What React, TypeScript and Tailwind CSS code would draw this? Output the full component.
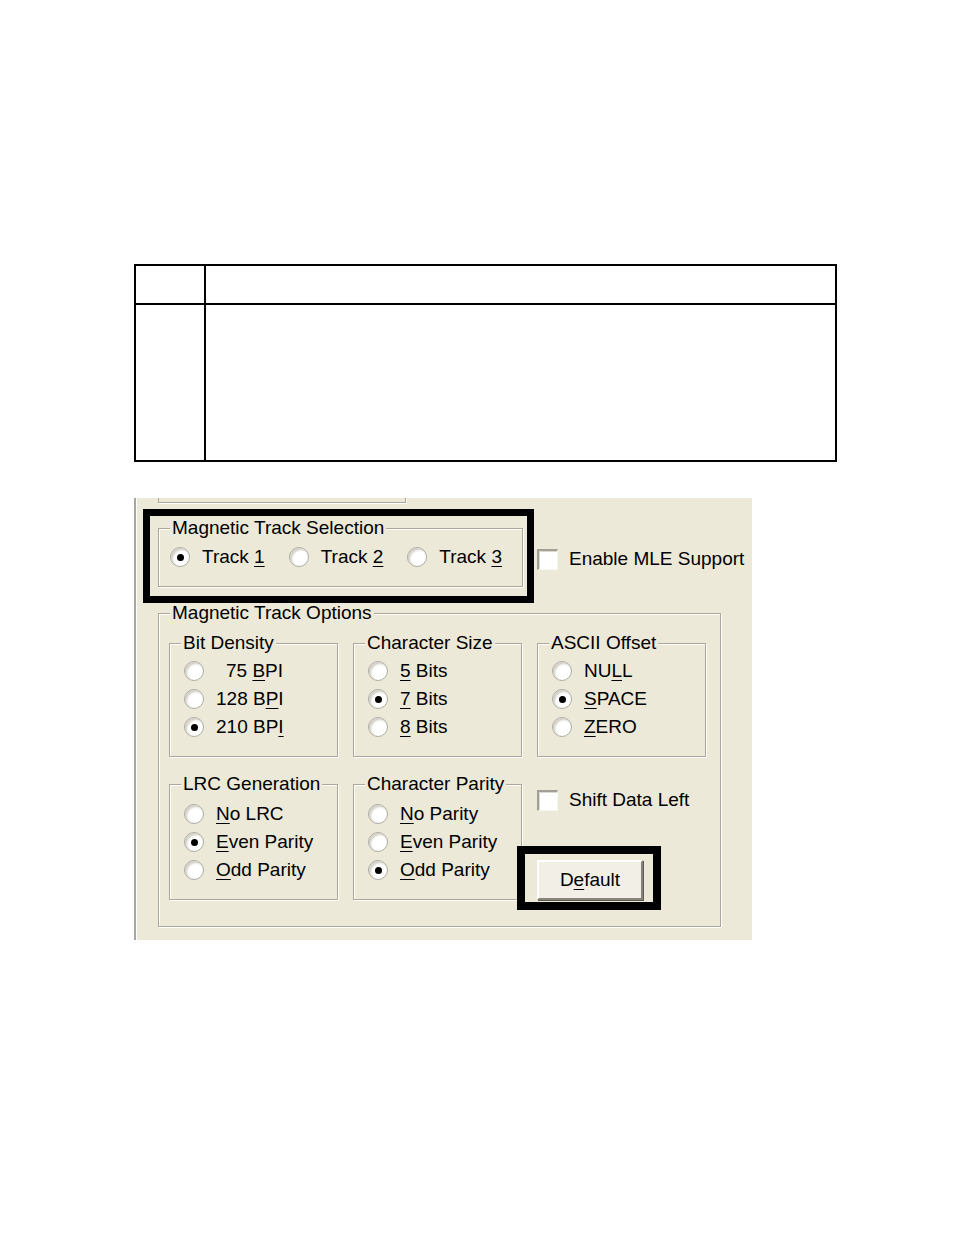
import React from 'react';

const face = 'bg-[#ece9d8]';

function Mn({ text, at }: { text: string; at: number }) {
  return (
    <>
      {text.slice(0, at)}
      <span className="underline underline-offset-[3px]">{text[at]}</span>
      {text.slice(at + 1)}
    </>
  );
}

function Radio({ checked, children, textClass = '' }: { checked?: boolean; children: React.ReactNode; textClass?: string }) {
  return (
    <div className="flex items-center h-[28px]">
      <span className="flex items-center justify-center w-[20px] h-[20px] shrink-0 rounded-full bg-white border border-[#aeaca2] shadow-[inset_2px_2px_2px_#d3d1c7]">
        {checked && <span className="w-[7px] h-[7px] rounded-full bg-black" />}
      </span>
      <span className={`ml-[12px] whitespace-nowrap ${textClass}`}>{children}</span>
    </div>
  );
}

function Check({ children }: { children: React.ReactNode }) {
  return (
    <div className="flex items-center h-[22px]">
      <span className="w-[21px] h-[21px] shrink-0 bg-white border-t-2 border-l-2 border-r border-b border-[#a19f96] border-r-[#f7f6f0] border-b-[#f7f6f0] shadow-[inset_1px_1px_0_#dcdad0]" />
      <span className="ml-[11px] whitespace-nowrap">{children}</span>
    </div>
  );
}

function Group({ title, className = '', children }: { title: string; className?: string; children: React.ReactNode }) {
  return (
    <fieldset className={`border border-[#aca899] shadow-[inset_1px_1px_0_#fff,1px_1px_0_#fff] ${className}`}>
      <legend className={`ml-[11px] px-[2px] leading-[22px] ${face}`}>{title}</legend>
      {children}
    </fieldset>
  );
}

function SubGroup({ title, pad = 'pt-[3px] pb-[15px]', children }: { title: string; pad?: string; children: React.ReactNode }) {
  return (
    <Group title={title} className="w-[169px]">
      <div className={`px-[14px] ${pad}`}>{children}</div>
    </Group>
  );
}

export default function App() {
  return (
    <div className="min-h-[1235px] bg-white pt-[264px] font-['Liberation_Sans',Arial,sans-serif] text-[19px] leading-[22px] text-black">
      <table className="ml-[134px] w-[703px] border-collapse">
        <tbody>
          <tr className="h-[39px]">
            <td className="w-[70px] border-2 border-black" />
            <td className="border-2 border-black" />
          </tr>
          <tr className="h-[157px]">
            <td className="border-2 border-black" />
            <td className="border-2 border-black" />
          </tr>
        </tbody>
      </table>

      <div className={`ml-[134px] mt-[36px] w-[618px] h-[442px] border-l-2 border-[#a6a6a2] shadow-[inset_1px_0_0_#fff] ${face}`}>
        <div className="ml-[22px] w-[248px] h-[5px] border-x border-b border-[#aca899] shadow-[1px_1px_0_#fff]" />

        <div className="flex items-start mt-[14px]">
          <div className="relative ml-[22px]">
            <Group title="Magnetic Track Selection" className="w-[365px]">
              <div className="flex gap-[24px] px-[11px] pt-[4px] pb-[15px]">
                <Radio checked>
                  <Mn text="Track 1" at={6} />
                </Radio>
                <Radio>
                  <Mn text="Track 2" at={6} />
                </Radio>
                <Radio>
                  <Mn text="Track 3" at={6} />
                </Radio>
              </div>
            </Group>
            <div className="absolute left-[-15px] top-[-8px] right-[-11px] bottom-[-16px] border-[7px] border-black pointer-events-none" />
          </div>
          <div className="ml-[14px] mt-[31px]">
            <Check>Enable MLE Support</Check>
          </div>
        </div>

        <Group title="Magnetic Track Options" className="ml-[22px] mt-[15px] w-[563px]">
          <div className="pl-[10px] pt-[8px] pb-[26px]">
            <div className="flex gap-[15px]">
              <SubGroup title="Bit Density">
                <Radio textClass="pl-[10px]">
                  75 <Mn text="BPI" at={0} />
                </Radio>
                <Radio>
                  128 <Mn text="BPI" at={1} />
                </Radio>
                <Radio checked>
                  210 <Mn text="BPI" at={2} />
                </Radio>
              </SubGroup>
              <SubGroup title="Character Size">
                <Radio>
                  <Mn text="5 Bits" at={0} />
                </Radio>
                <Radio checked>
                  <Mn text="7 Bits" at={0} />
                </Radio>
                <Radio>
                  <Mn text="8 Bits" at={0} />
                </Radio>
              </SubGroup>
              <SubGroup title="ASCII Offset">
                <Radio>
                  <Mn text="NULL" at={2} />
                </Radio>
                <Radio checked>
                  <Mn text="SPACE" at={0} />
                </Radio>
                <Radio>
                  <Mn text="ZERO" at={0} />
                </Radio>
              </SubGroup>
            </div>

            <div className="flex gap-[15px] mt-[16px]">
              <SubGroup title="LRC Generation" pad="pt-[5px] pb-[13px]">
                <Radio>
                  <Mn text="No LRC" at={0} />
                </Radio>
                <Radio checked>
                  <Mn text="Even Parity" at={0} />
                </Radio>
                <Radio>
                  <Mn text="Odd Parity" at={0} />
                </Radio>
              </SubGroup>
              <SubGroup title="Character Parity" pad="pt-[5px] pb-[13px]">
                <Radio>
                  <Mn text="No Parity" at={0} />
                </Radio>
                <Radio>
                  <Mn text="Even Parity" at={0} />
                </Radio>
                <Radio checked>
                  <Mn text="Odd Parity" at={0} />
                </Radio>
              </SubGroup>
              <div className="flex flex-col items-start pt-[16px]">
                <Check>Shift Data Left</Check>
                <div className="relative mt-[49px]">
                  <button className="w-[106px] h-[40px] bg-[#f1efe6] border-2 border-t-white border-l-white border-b-[#85837a] border-r-[#85837a] shadow-[1px_1px_0_#5e5c55] text-[19px] leading-[22px]">
                    <Mn text="Default" at={1} />
                  </button>
                  <div className="absolute left-[-20px] top-[-14px] right-[-18px] bottom-[-10px] border-[8px] border-black pointer-events-none" />
                </div>
              </div>
            </div>
          </div>
        </Group>
      </div>
    </div>
  );
}
